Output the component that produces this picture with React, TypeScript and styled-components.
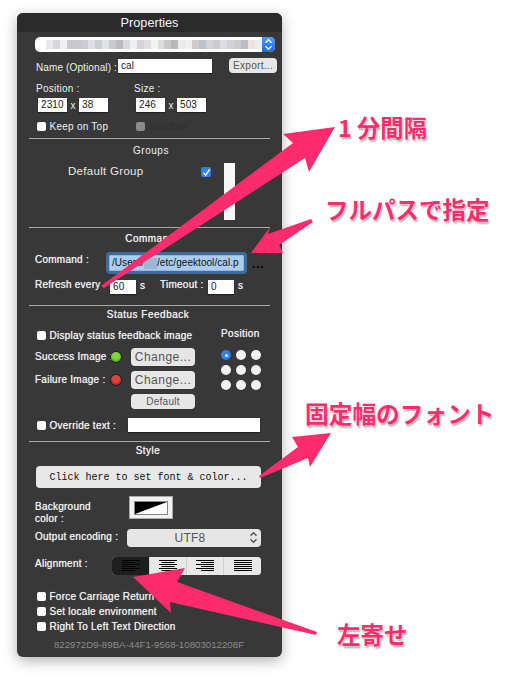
import React from 'react';
import styled, { createGlobalStyle } from 'styled-components';

const GlobalStyle = createGlobalStyle`
  html, body {
    margin: 0;
    background: #fff;
  }
  body {
    width: 509px;
    height: 678px;
    overflow: hidden;
    font-family: "Liberation Sans", Arial, sans-serif;
  }
`;

const pixels = [
  '#e8e8ea', '#d8d6da', '#eef0f2', '#c9c9cc', '#c8c8cd', '#cdccd4', '#dedee4', '#ccccd3', '#dfe4e4',
  '#c9c9ce', '#bcbac1', '#d8d8dd', '#eeeff2', '#d6d2d6', '#e0dee0', '#f2f2f2', '#dcdcdc', '#c9c9c9',
  '#b8b8b8', '#eaeaea', '#f0f0f0', '#d0caca', '#bec2c6', '#d2d4d8', '#cacad0', '#dcdce4', '#d2d2d8',
  '#cccccf', '#bcbcc2', '#ebe2e2', '#e4eef4',
];

const App = () => (
  <>
    <GlobalStyle />
    <Page>
      <Panel>
        <TitleBar>Properties</TitleBar>

        <Row $top={5} $h={15} $left={18}>
          <Popup>
            <PopupPixels>
              {pixels.map((c, i) => (
                <Pixel key={i} style={{ background: c }} />
              ))}
            </PopupPixels>
            <Stepper>
              <Chevrons color="#fff" />
            </Stepper>
          </Popup>
        </Row>

        <Row $top={6} $h={15} $left={19}>
          <NameLabel $w={82}>Name (Optional) :</NameLabel>
          <TextBox $w={94}>cal</TextBox>
          <ExportButton>Export...</ExportButton>
        </Row>

        <Row $top={9} $h={13} $left={19}>
          <Label $w={98}>Position :</Label>
          <Label>Size :</Label>
        </Row>

        <Row $top={3} $h={14} $left={21}>
          <TextBox $w={29}>2310</TextBox>
          <Times>x</Times>
          <TextBox $w={29}>38</TextBox>
          <Spacer $w={28} />
          <TextBox $w={29}>246</TextBox>
          <Times>x</Times>
          <TextBox $w={29}>503</TextBox>
        </Row>

        <Row $top={8} $h={12} $left={20}>
          <CheckItem $w={99}>
            <CheckBox />
            Keep on Top
          </CheckItem>
          <CheckItem $dim>
            <CheckBox $dim />
            Shadow
          </CheckItem>
        </Row>

        <Divider $top={6} />
        <Heading $top={5} $center={134}>
          Groups
        </Heading>

        <GroupsRow>
          <GroupName>Default Group</GroupName>
          <BlueCheck>
            <svg width="9" height="9" viewBox="0 0 9 9">
              <path d="M1.5 4.6 L3.6 7.2 L7.6 1.4" fill="none" stroke="#fff" strokeWidth="1.5" />
            </svg>
          </BlueCheck>
          <GroupBar />
        </GroupsRow>

        <Divider $top={7} />
        <Heading $top={4} $center={133} $strong>
          Command
        </Heading>

        <CommandRow>
          <Label $w={71} $strong $lift={4}>
            Command :
          </Label>
          <CommandField>
            <Selected>
              /Users/
              <Redacted />
              /etc/geektool/cal.p
            </Selected>
          </CommandField>
          <Ellipsis>...</Ellipsis>
        </CommandRow>

        <RefreshRow>
          <Label $w={75} $strong $lift={3}>
            Refresh every
          </Label>
          <TextBox $w={26}>60</TextBox>
          <Unit>s</Unit>
          <Label $w={48} $strong $lift={3}>
            Timeout :
          </Label>
          <TextBox $w={26}>0</TextBox>
          <Unit>s</Unit>
        </RefreshRow>

        <Divider $top={11} />
        <Heading $top={2} $center={131} $strong>
          Status Feedback
        </Heading>

        <StatusGrid>
          <StatusLeft>
            <Row $top={0} $h={12} $left={20}>
              <CheckItem $strong>
                <CheckBox />
                Display status feedback image
              </CheckItem>
            </Row>
            <ImageRow $top={7}>
              <Label $w={75} $strong $lift={1}>
                Success Image :
              </Label>
              <Led $color="#7fd43a" $edge="#3f8a12" />
              <ChangeButton>Change...</ChangeButton>
            </ImageRow>
            <ImageRow $top={5}>
              <Label $w={75} $strong $lift={1}>
                Failure Image :
              </Label>
              <Led $color="#e2433c" $edge="#8d1512" />
              <ChangeButton>Change...</ChangeButton>
            </ImageRow>
            <DefaultButton>Default</DefaultButton>
          </StatusLeft>
          <PositionBox>
            <PositionTitle>Position</PositionTitle>
            <RadioGrid>
              {Array.from({ length: 9 }).map((_, i) => (
                <Radio key={i} $on={i === 0} />
              ))}
            </RadioGrid>
          </PositionBox>
        </StatusGrid>

        <Row $top={9} $h={14} $left={20}>
          <CheckItem $w={91} $strong>
            <CheckBox />
            Override text :
          </CheckItem>
          <TextBox $w={132} />
        </Row>

        <Divider $top={9} />
        <Heading $top={2} $center={131} $strong>
          Style
        </Heading>

        <FontButton>Click here to set font &amp; color...</FontButton>

        <Row $top={8} $h={23} $left={18}>
          <BackgroundLabel>
            Background
            <br />
            color :
          </BackgroundLabel>
          <Swatch>
            <SwatchInner>
              <svg width="32" height="12" viewBox="0 0 32 12">
                <rect width="32" height="12" fill="#fff" />
                <polygon points="0,0 32,0 0,12" fill="#000" />
              </svg>
            </SwatchInner>
          </Swatch>
        </Row>

        <Row $top={10} $h={18} $left={18}>
          <Label $w={92} $strong $lift={2}>
            Output encoding :
          </Label>
          <EncodingSelect>
            UTF8
            <EncodingArrows>
              <Chevrons color="#555" />
            </EncodingArrows>
          </EncodingSelect>
        </Row>

        <Row $top={10} $h={18} $left={18}>
          <Label $w={77} $strong $lift={3}>
            Alignment :
          </Label>
          <Segments>
            <Segment $active $w={38}>
              <AlignIcon type="left" />
            </Segment>
            <Segment $w={37}>
              <AlignIcon type="center" />
            </Segment>
            <Segment $w={37}>
              <AlignIcon type="right" />
            </Segment>
            <Segment $w={37}>
              <AlignIcon type="full" />
            </Segment>
          </Segments>
        </Row>

        <Row $top={15} $h={12} $left={20}>
          <CheckItem $strong>
            <CheckBox />
            Force Carriage Return
          </CheckItem>
        </Row>
        <Row $top={3} $h={12} $left={20}>
          <CheckItem $strong>
            <CheckBox />
            Set locale environment
          </CheckItem>
        </Row>
        <Row $top={3} $h={12} $left={20}>
          <CheckItem $strong>
            <CheckBox />
            Right To Left Text Direction
          </CheckItem>
        </Row>

        <Uuid>822972D9-89BA-44F1-9568-10803012208F</Uuid>
      </Panel>

      <Arrows width="509" height="678" viewBox="0 0 509 678">
        <polygon points="335,127 283,134 293,143 101,286 104,288 305,158 309,172" />
        <polygon points="251,253 270,227 268,234 311,219 313,222 279,245 283,253" />
        <polygon points="331,433 292,437 298,447 259,476 260,478 308,458 310,467" />
        <polygon points="133,577 185,568 177,582 317,632 316,635 170,602 171,613" />
      </Arrows>

      <Note $x={338} $y={112} $size={23.3}>
        1 分間隔
      </Note>
      <Note $x={325} $y={194} $size={23.5}>
        フルパスで指定
      </Note>
      <Note $x={305} $y={398} $size={23.7}>
        固定幅のフォント
      </Note>
      <Note $x={337} $y={619} $size={23.5}>
        左寄せ
      </Note>
    </Page>
  </>
);

const Chevrons = ({ color }: { color: string }) => (
  <svg width="9" height="13" viewBox="0 0 9 13">
    <path
      d="M1.5 4.8 L4.5 1.8 L7.5 4.8 M1.5 8.2 L4.5 11.2 L7.5 8.2"
      fill="none"
      stroke={color}
      strokeWidth="1.4"
    />
  </svg>
);

const AlignIcon = ({ type }: { type: 'left' | 'center' | 'right' | 'full' }) => {
  const lines = [0, 2, 4, 6, 8, 10];
  return (
    <svg width="18" height="12" viewBox="0 0 18 12">
      {lines.map((y, i) => {
        const short = i % 2 === 1;
        const w = type === 'full' || !short ? 18 : 13;
        let x = 0;
        if (type === 'center') x = (18 - w) / 2;
        if (type === 'right') x = 18 - w;
        return <rect key={y} x={x} y={y} width={w} height={1} fill="#000" />;
      })}
    </svg>
  );
};

const Page = styled.div`
  position: relative;
  width: 509px;
  height: 678px;
  padding: 13px 0 0 17px;
  box-sizing: border-box;
`;

const Panel = styled.div`
  width: 265px;
  height: 644px;
  display: flex;
  flex-direction: column;
  background: #383838;
  border-radius: 6px;
  box-shadow: 0 4px 14px rgba(0, 0, 0, 0.3);
  color: #f0f0f0;
  font-size: 10px;
  letter-spacing: 0.25px;
  overflow: hidden;
`;

const TitleBar = styled.div`
  height: 19px;
  flex: none;
  display: flex;
  align-items: center;
  justify-content: center;
  background: #2b2b2b;
  color: #f4f4f4;
  font-size: 12.7px;
  letter-spacing: 0;
`;

const Row = styled.div<{ $top: number; $h: number; $left: number }>`
  display: flex;
  align-items: center;
  flex: none;
  height: ${p => p.$h}px;
  margin-top: ${p => p.$top}px;
  padding-left: ${p => p.$left}px;
`;

const Popup = styled.div`
  width: 240px;
  height: 15px;
  display: flex;
  align-items: center;
  background: #fff;
  border-radius: 5px;
  overflow: hidden;
`;

const PopupPixels = styled.div`
  flex: 1;
  height: 9px;
  display: flex;
  padding-left: 11px;
`;

const Pixel = styled.div`
  flex: 1;
  height: 100%;
`;

const Stepper = styled.div`
  width: 13px;
  height: 15px;
  display: flex;
  align-items: center;
  justify-content: center;
  background: linear-gradient(#4d9bf8, #1a68ee);
`;

const Label = styled.div<{ $w?: number; $strong?: boolean; $lift?: number }>`
  flex: none;
  width: ${p => (p.$w ? `${p.$w}px` : 'auto')};
  margin-bottom: ${p => (p.$lift ?? 0) * 2}px;
  white-space: nowrap;
  text-shadow: ${p => (p.$strong ? '0 0 0.7px rgba(255,255,255,0.8)' : 'none')};
`;

const NameLabel = styled(Label)`
  margin-top: 4px;
  letter-spacing: 0.12px;
`;

const TextBox = styled.div<{ $w: number }>`
  flex: none;
  box-sizing: border-box;
  width: ${p => p.$w}px;
  height: 14px;
  padding: 0 3px;
  background: #fff;
  color: #222;
  font-size: 10px;
  line-height: 14px;
  letter-spacing: 0.1px;
  box-shadow: 0 1px 1px rgba(0, 0, 0, 0.4);
`;

const ExportButton = styled.div`
  margin-left: 17px;
  width: 48px;
  height: 15px;
  display: flex;
  align-items: center;
  justify-content: center;
  background: #e6e6e6;
  border-radius: 4px;
  color: #555;
  letter-spacing: 0.3px;
`;

const Times = styled.div`
  width: 12px;
  text-align: center;
  color: #eee;
`;

const Spacer = styled.div<{ $w: number }>`
  width: ${p => p.$w}px;
  flex: none;
`;

const CheckItem = styled.div<{ $w?: number; $dim?: boolean; $strong?: boolean }>`
  display: flex;
  align-items: center;
  gap: 3.5px;
  flex: none;
  width: ${p => (p.$w ? `${p.$w}px` : 'auto')};
  white-space: nowrap;
  color: ${p => (p.$dim ? '#2e2e2e' : '#f0f0f0')};
  text-shadow: ${p => (p.$strong ? '0 0 0.7px rgba(255,255,255,0.8)' : 'none')};
`;

const CheckBox = styled.div<{ $dim?: boolean }>`
  width: 9px;
  height: 9px;
  flex: none;
  border-radius: 2px;
  background: ${p => (p.$dim ? '#8a8a8a' : '#fff')};
`;

const Divider = styled.div<{ $top: number }>`
  flex: none;
  height: 1px;
  width: 241px;
  margin: ${p => p.$top}px 0 0 12px;
  background: #a8a8a8;
`;

const Heading = styled.div<{ $top: number; $center: number; $strong?: boolean }>`
  flex: none;
  width: ${p => p.$center * 2}px;
  height: 13px;
  margin-top: ${p => p.$top}px;
  line-height: 13px;
  text-align: center;
  letter-spacing: 0.5px;
  text-shadow: ${p => (p.$strong ? '0 0 0.7px rgba(255,255,255,0.8)' : 'none')};
`;

const GroupsRow = styled.div`
  flex: none;
  height: 56px;
  margin-top: 7px;
  display: flex;
  align-items: flex-start;
  padding-left: 51px;
`;

const GroupName = styled.div`
  width: 133px;
  font-size: 11.5px;
  line-height: 15px;
  letter-spacing: 0.3px;
  color: #e8e8e8;
`;

const BlueCheck = styled.div`
  width: 10px;
  height: 10px;
  margin-top: 3px;
  border-radius: 2px;
  background: #2f7fe8;
  display: flex;
  align-items: center;
  justify-content: center;
`;

const GroupBar = styled.div`
  width: 11px;
  height: 57px;
  margin-left: 13px;
  margin-top: -1px;
  background: #f6f6f6;
`;

const CommandRow = styled.div`
  flex: none;
  display: flex;
  align-items: center;
  height: 22px;
  margin-top: 7px;
  padding-left: 18px;
`;

const CommandField = styled.div`
  flex: none;
  box-sizing: border-box;
  width: 141px;
  height: 22px;
  padding: 4px;
  border-radius: 4px;
  background: #3f6a9c;
  color: #111;
`;

const Selected = styled.div`
  display: flex;
  align-items: center;
  height: 14px;
  padding-left: 2px;
  background: #abcdf4;
  box-shadow: 0 0 0 0.5px #fff;
  line-height: 14px;
  letter-spacing: 0.05px;
  white-space: nowrap;
  overflow: hidden;
`;

const Redacted = styled.span`
  display: inline-block;
  flex: none;
  width: 13px;
  height: 11px;
  background: #9cb6d6;
`;

const Ellipsis = styled.div`
  margin-left: 5px;
  margin-top: 2px;
  color: #000;
  font-size: 12px;
  font-weight: 700;
  letter-spacing: 0.8px;
`;

const RefreshRow = styled.div`
  flex: none;
  display: flex;
  align-items: center;
  height: 14px;
  margin-top: 6px;
  padding-left: 18px;
`;

const Unit = styled.div`
  width: 24px;
  padding-left: 4px;
  margin-top: -4px;
  box-sizing: border-box;
  text-shadow: 0 0 0.7px rgba(255, 255, 255, 0.8);
`;

const StatusGrid = styled.div`
  flex: none;
  display: flex;
  height: 80px;
  margin-top: 8px;
`;

const StatusLeft = styled.div`
  width: 204px;
  flex: none;
  display: flex;
  flex-direction: column;
`;

const ImageRow = styled.div<{ $top: number }>`
  display: flex;
  align-items: center;
  height: 18px;
  margin-top: ${p => p.$top}px;
  padding-left: 18px;
`;

const Led = styled.div<{ $color: string; $edge: string }>`
  width: 10px;
  height: 10px;
  flex: none;
  margin: 0 11px 0 1px;
  border-radius: 50%;
  background: radial-gradient(circle at 50% 35%, ${p => p.$color} 40%, ${p => p.$edge} 100%);
  box-shadow: 0 0 0 1px #222;
`;

const ChangeButton = styled.div`
  width: 64px;
  height: 18px;
  flex: none;
  display: flex;
  align-items: center;
  justify-content: center;
  margin-left: -1px;
  background: #e6e6e6;
  border-radius: 4px;
  color: #555;
  font-size: 12px;
  letter-spacing: 0.5px;
`;

const DefaultButton = styled.div`
  width: 64px;
  height: 15px;
  margin: 5px 0 0 114px;
  display: flex;
  align-items: center;
  justify-content: center;
  background: #e6e6e6;
  border-radius: 4px;
  color: #555;
`;

const PositionBox = styled.div`
  display: flex;
  flex-direction: column;
  margin-top: -2px;
`;

const PositionTitle = styled.div`
  height: 13px;
  line-height: 13px;
  letter-spacing: 0.4px;
  text-shadow: 0 0 0.7px rgba(255, 255, 255, 0.8);
`;

const RadioGrid = styled.div`
  display: grid;
  grid-template-columns: repeat(3, 10px);
  grid-auto-rows: 10px;
  gap: 5px;
  margin-top: 10px;
`;

const Radio = styled.div<{ $on?: boolean }>`
  border-radius: 50%;
  display: flex;
  align-items: center;
  justify-content: center;
  background: ${p => (p.$on ? '#2f7fe8' : '#f2f2f2')};

  &::after {
    content: '';
    width: 3px;
    height: 3px;
    border-radius: 50%;
    background: ${p => (p.$on ? '#fff' : 'transparent')};
  }
`;

const FontButton = styled.div`
  flex: none;
  width: 225px;
  height: 22px;
  margin: 9px 0 0 19px;
  display: flex;
  align-items: center;
  justify-content: center;
  background: #e8e8e8;
  border-radius: 4px;
  color: #111;
  font-family: "Liberation Mono", "DejaVu Sans Mono", monospace;
  font-size: 10px;
  letter-spacing: 0;
  white-space: nowrap;
`;

const BackgroundLabel = styled.div`
  width: 94px;
  flex: none;
  line-height: 12px;
  margin-top: 10px;
  text-shadow: 0 0 0.7px rgba(255, 255, 255, 0.8);
`;

const Swatch = styled.div`
  width: 44px;
  height: 23px;
  flex: none;
  box-sizing: border-box;
  display: flex;
  align-items: center;
  justify-content: center;
  background: #f2f2f2;
  border: 1px solid #aaa;
`;

const SwatchInner = styled.div`
  display: flex;
  border: 1px solid #888;
`;

const EncodingSelect = styled.div`
  position: relative;
  box-sizing: border-box;
  width: 134px;
  height: 18px;
  flex: none;
  padding-right: 8px;
  display: flex;
  align-items: center;
  justify-content: center;
  background: #e6e6e6;
  border-radius: 4px;
  color: #555;
  font-size: 12px;
`;

const EncodingArrows = styled.span`
  position: absolute;
  right: 3px;
  top: 2px;
`;

const Segments = styled.div`
  display: flex;
  width: 149px;
  height: 18px;
  flex: none;
  border-radius: 4px;
  overflow: hidden;
  background: #e6e6e6;
`;

const Segment = styled.div<{ $active?: boolean; $w: number }>`
  box-sizing: border-box;
  width: ${p => p.$w}px;
  flex: none;
  display: flex;
  align-items: center;
  justify-content: center;
  background: ${p => (p.$active ? '#1e1e1e' : '#e8e8e8')};
  border-right: 1px solid #cfcfcf;

  &:last-child {
    border-right: 0;
  }
`;

const Uuid = styled.div`
  flex: none;
  width: 264px;
  height: 12px;
  margin-top: 7px;
  line-height: 12px;
  text-align: center;
  color: #8c8c8c;
  font-size: 9.7px;
  letter-spacing: 0;
`;

const Arrows = styled.svg`
  position: absolute;
  left: 0;
  top: 0;
  pointer-events: none;

  polygon {
    fill: #fe2c6e;
  }
`;

const Note = styled.div<{ $x: number; $y: number; $size: number }>`
  position: absolute;
  left: ${p => p.$x}px;
  top: ${p => p.$y}px;
  font-family: "Noto Sans CJK JP", sans-serif;
  font-weight: 700;
  font-size: ${p => p.$size}px;
  line-height: 30px;
  white-space: nowrap;
  color: #fe2c6e;
  text-shadow:
    0 0 2px #fff,
    1px 2px 2px rgba(0, 0, 0, 0.35);
`;

export default App;
